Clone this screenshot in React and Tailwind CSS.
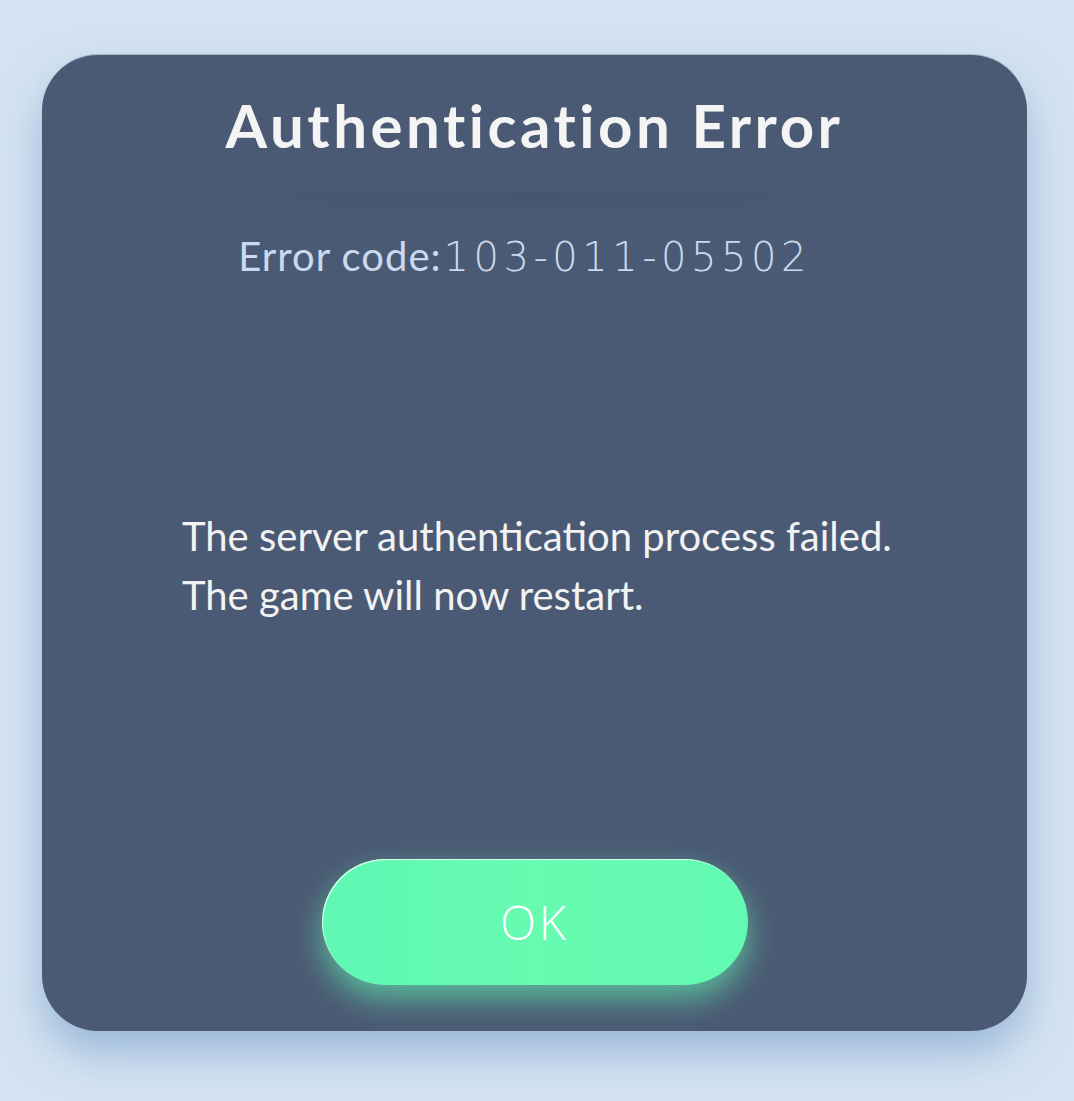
export default function App() {
  return (
    <div className="min-h-[1101px] w-full bg-[#d4e3f1] pt-[55px] pl-[42px]" style={{ fontFamily: "Lato, 'Open Sans', sans-serif" }}>
      <div className="relative flex h-[976px] w-[985px] flex-col items-center rounded-[56px] bg-[#4b5a74] pt-[35px] shadow-[0_22px_40px_rgba(110,150,200,0.55),0_-1px_0_rgba(170,180,195,0.9)]">
        <h1 className="h-[70px] text-[60px] font-bold leading-[70px] tracking-[3.5px] text-[#f4f4f4]">
          Authentication Error
        </h1>
        <div className="mt-[25px] h-[28px] w-[780px] bg-[radial-gradient(ellipse_at_center,rgba(60,80,110,0.5),rgba(75,90,116,0)_70%)]" />
        <div className="mt-[21px] flex h-[44px] items-baseline pr-[20px] leading-[44px] text-[#c9daee]">
          <span className="text-[40px] tracking-[1px]">Error code:</span>
          <span className="ml-[2px] text-[40px] tracking-[4.5px]" style={{ fontFamily: "'DejaVu Sans', sans-serif", fontWeight: 300 }}>103-011-05502</span>
        </div>
        <div className="mt-[229px] self-stretch pl-[140px] text-[40px] leading-[59px] text-[#f2f2f2]">
          <p>The server authentication process failed.</p>
          <p>The game will now restart.</p>
        </div>
        <button className="mt-[234px] flex h-[126px] w-[426px] items-center justify-center rounded-full bg-[linear-gradient(90deg,#5ff7b4,#66fbb0_50%,#62f9b2)] text-[47px] font-light tracking-[3px] text-white shadow-[0_14px_30px_rgba(98,248,176,0.6),inset_1px_1px_1px_rgba(255,255,255,0.8)]" style={{ fontFamily: "'Open Sans', sans-serif" }}>
          OK
        </button>
      </div>
    </div>
  );
}
